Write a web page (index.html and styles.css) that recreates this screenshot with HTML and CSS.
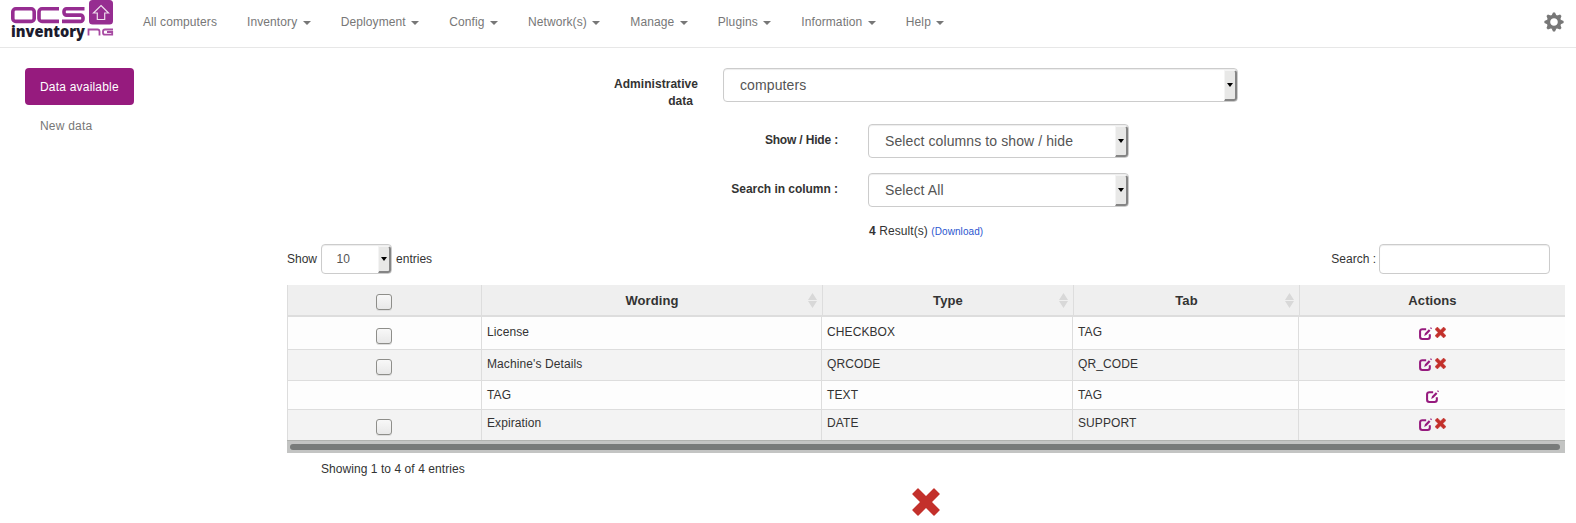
FILE: index.html
```
<!DOCTYPE html>
<html lang="en">
<head>
<meta charset="utf-8">
<title>OCS Inventory</title>
<link rel="stylesheet" href="styles.css">
</head>
<body>
<svg class="defs" width="0" height="0">
  <symbol id="edit" viewBox="0 0 12 12">
    <path d="M6.600 2H3A2 2 0 0 0 1 4V9a2 2 0 0 0 2 2h5a2 2 0 0 0 2-2V6.600" fill="none" stroke="currentColor" stroke-width="1.900"/>
    <path d="M4.800 8.200l.7-2.500L9.100 2l1.500 1.500-3.600 3.700zM10.200 1l.8-.8 1 1-.8.8z" fill="currentColor"/>
  </symbol>
  <symbol id="remove" viewBox="0 0 28 28">
    <path d="M6.500.5L14 8 21.500.5Q22 0 22.500.5L27.500 5.500Q28 6 27.500 6.500L20 14l7.500 7.500q.5.500 0 1l-5 5q-.5.500-1 0L14 20l-7.500 7.500q-.5.500-1 0l-5-5q-.5-.5 0-1L8 14 .5 6.500Q0 6 .5 5.500L5.500.5Q6 0 6.500.5z" fill="currentColor"/>
  </symbol>
</svg>
<header class="navbar">
  <a class="logo">
    <svg width="104" height="42" viewBox="0 0 104 42">
      <g fill="none" stroke="#962d91" stroke-width="3.600">
        <rect x="1.800" y="8.800" width="21.400" height="12.600" rx="3"/>
        <path d="M48 8.800H31a3 3 0 0 0-3 3v6.600a3 3 0 0 0 3 3h17"/>
        <path d="M73.500 8.800H55.500a2.500 2.500 0 0 0-2.500 2.500v1.300a2.500 2.500 0 0 0 2.500 2.500h14a2.500 2.500 0 0 1 2.500 2.500v1.300a2.500 2.500 0 0 1-2.500 2.500H51"/>
      </g>
      <rect x="78" y="0" width="24" height="24.500" rx="3.500" fill="#962d91"/>
      <path d="M90 5.500l7.500 7.500h-3.800v6.500h-7.400V13h-3.800z" fill="none" stroke="#eddcec" stroke-width="1.200"/>
      <text class="logo-word" x="0" y="36.500" textLength="74" lengthAdjust="spacingAndGlyphs">inventory</text>
      <g fill="none" stroke="#a74aa2" stroke-width="1.800">
        <path d="M77.500 35.500v-6h9a2 2 0 0 1 2 2v4"/>
        <path d="M102 29.500H94a2 2 0 0 0-2 2v1.200a2 2 0 0 0 2 2h7.200v-2.700H96"/>
      </g>
    </svg>
  </a>
  <nav class="menu">
    <a>All computers</a>
    <a>Inventory <i class="caret"></i></a>
    <a>Deployment <i class="caret"></i></a>
    <a>Config <i class="caret"></i></a>
    <a>Network(s) <i class="caret"></i></a>
    <a>Manage <i class="caret"></i></a>
    <a>Plugins <i class="caret"></i></a>
    <a>Information <i class="caret"></i></a>
    <a>Help <i class="caret"></i></a>
  </nav>
  <svg class="gear" width="20" height="20" viewBox="-10 -10 20 20">
    <circle r="5.500" fill="none" stroke="currentColor" stroke-width="3.400"/>
    <g fill="currentColor">
      <path id="t" d="M-2.500-6.200l1.500-3.400h2l1.500 3.400zM-2.500 6.200l1.500 3.400h2l1.500-3.400z"/>
      <use href="#t" transform="rotate(45)"/><use href="#t" transform="rotate(90)"/><use href="#t" transform="rotate(135)"/>
    </g>
  </svg>
</header>
<div class="page">
  <aside class="side">
    <a class="tab active">Data available</a>
    <a class="tab">New data</a>
  </aside>
  <main class="main">
    <div class="field admin"><label>Administrative<br>data<span class="pad"></span></label><div class="select"><span>computers</span><b class="drop"></b></div></div>
    <div class="field"><label class="tight">Show / Hide :</label><div class="select"><span>Select columns to show / hide</span><b class="drop"></b></div></div>
    <div class="field"><label>Search in column :</label><div class="select"><span>Select All</span><b class="drop"></b></div></div>
    <p class="result"><b>4</b> Result(s) <a>(Download)</a></p>
    <div class="tools">
      <div class="length">Show <div class="select small"><span>10</span><b class="drop"></b></div> entries</div>
      <div class="search">Search : <input type="text"></div>
    </div>
    <div class="table">
      <div class="row head"><div><i class="check"></i></div><div>Wording<i class="sort"></i></div><div>Type<i class="sort"></i></div><div>Tab<i class="sort"></i></div><div>Actions</div></div>
      <div class="row r1"><div><i class="check"></i></div><div>License</div><div>CHECKBOX</div><div>TAG</div><div class="act"><svg class="edit"><use href="#edit"/></svg><svg class="del"><use href="#remove"/></svg></div></div>
      <div class="row r2"><div><i class="check"></i></div><div>Machine's Details</div><div>QRCODE</div><div>QR_CODE</div><div class="act"><svg class="edit"><use href="#edit"/></svg><svg class="del"><use href="#remove"/></svg></div></div>
      <div class="row r3"><div></div><div>TAG</div><div>TEXT</div><div>TAG</div><div class="act"><svg class="edit"><use href="#edit"/></svg></div></div>
      <div class="row r4"><div><i class="check"></i></div><div>Expiration</div><div>DATE</div><div>SUPPORT</div><div class="act"><svg class="edit"><use href="#edit"/></svg><svg class="del"><use href="#remove"/></svg></div></div>
      <div class="scroll"><div class="thumb"></div></div>
    </div>
    <p class="info">Showing 1 to 4 of 4 entries</p>
    <svg class="remove-all"><use href="#remove"/></svg>
  </main>
</div>
</body>
</html>
```
FILE: styles.css
```
* { box-sizing: border-box; }
body { margin: 0; height: 523px; overflow: hidden; background: #fff; color: #333; font: 12px/17px "Liberation Sans", Arial, sans-serif; }
p { margin: 0; }
.defs { display: block; }
.navbar { height: 48px; border-bottom: 1px solid #e7e7e7; display: flex; color: #777; }
.logo { width: 132px; padding-left: 11px; flex: none; }
.logo svg { display: block; }
.logo-word { font: 800 15px "Open Sans", sans-serif; fill: #1c1b2e; }
.menu { display: flex; flex: 1; gap: 30px; padding: 14px 0 0 11px; white-space: nowrap; letter-spacing: .1px; }
.caret { display: inline-block; margin-left: 2px; vertical-align: middle; border-top: 4px solid; border-left: 4px solid transparent; border-right: 4px solid transparent; }
.gear { margin: 12px 12px 0 0; }
.page { display: grid; grid-template-columns: 287px 1278px; }
.side { padding: 20px 0 0 25px; display: flex; flex-direction: column; align-items: flex-start; gap: 2px; }
.tab { height: 37px; padding: 11px 15px; border-radius: 4px; color: #777; white-space: nowrap; letter-spacing: .2px; }
.tab.active { background: #961b7e; color: #fff; }
.main { padding-top: 20px; }
.field { display: grid; grid-template-columns: 551px 261px; column-gap: 30px; height: 34px; margin-bottom: 15px; }
.field label { text-align: right; font-weight: bold; padding-top: 8px; letter-spacing: -.04px; }
.field .tight { letter-spacing: -.17px; }
.pad { display: inline-block; width: 5px; }
.field.admin { grid-template-columns: 411px 515px; column-gap: 25px; margin-bottom: 22px; }
.field.admin label { letter-spacing: .05px; }
.select { display: flex; height: 34px; border: 1px solid #ccc; border-radius: 4px; color: #555; font-size: 14px; letter-spacing: .1px; box-shadow: inset 0 1px 1px rgba(0,0,0,.075); }
.select span { flex: 1; padding: 8px 0 0 16px; white-space: nowrap; }
.drop { width: 13px; margin-top: 1px; background: #e8e8e7; border: solid; border-width: 1px 2px 2px 1px; border-color: #f4f4f4 #858585 #858585 #f4f4f4; border-radius: 0 3px 3px 0; display: flex; justify-content: center; align-items: center; }
.drop::after { content: ""; border-top: 4px solid #000; border-left: 3.500px solid transparent; border-right: 3.500px solid transparent; }
.result { padding: 1px 0 0 582px; height: 22px; letter-spacing: .08px; }
.result a { color: #2a56cf; font-size: 10px; }
.tools { display: flex; justify-content: space-between; height: 41px; }
.length, .search { display: flex; height: 30px; align-items: center; gap: 4px; }
.search { padding-right: 15px; gap: 3px; }
.small { width: 71px; height: 30px; font-size: 12px; }
.small span { padding: 6px 0 0 14.500px; }
.search input { width: 171px; height: 30px; border: 1px solid #ccc; border-radius: 4px; box-shadow: inset 0 1px 1px rgba(0,0,0,.075); }
.row { display: grid; grid-template-columns: 194px 340px 251px 226px 267px; border-bottom: 1px solid #ddd; background: #fdfdfd; letter-spacing: .1px; }
.row > div { border-left: 1px solid #ddd; padding: 6px 5px 0; position: relative; }
.row > div:first-child { padding: 11px 1px 0 0; text-align: center; line-height: 0; letter-spacing: 0; }
.head { height: 32px; border-bottom: 2px solid #ddd; background: #efefef; font-weight: bold; font-size: 13px; text-align: center; grid-template-columns: 194px 341px 251px 226px 266px; }
.head > div:first-child { padding-top: 9px; }
.head > div { padding-top: 7px; }
.r1 { height: 33px; }
.r2 { height: 31px; }
.r3 { height: 29px; }
.r4 { height: 30px; border-bottom: 0; }
.r2, .r4 { background: #f3f3f3; }
.r1 > div { padding-top: 7px; }
.r3 > div { padding-top: 6px; }
.r4 > div { padding-top: 5px; }
.r2 > div:first-child { padding-top: 9px; }
.r4 > div:first-child { padding-top: 9px; }
.check { display: inline-block; width: 16px; height: 16px; border: 1px solid #8e8e8a; border-radius: 3px; background: linear-gradient(#f8f8f8, #e8e8e8); box-shadow: 0 1px 0 #ddd; }
.sort { position: absolute; right: 5px; top: 8px; width: 9px; height: 15px; background: #d8d8d8; clip-path: polygon(50% 0, 100% 46%, 0 46%, 0 54%, 100% 54%, 50% 100%, 0 54%, 0 46%); }
.row > .act { display: flex; justify-content: center; gap: 3px; padding-top: 10px; }
.r2 > .act, .r4 > .act { padding-top: 8px; }
.r3 > .act { padding-top: 9px; }
.edit { width: 13px; height: 13px; color: #961b7e; }
.del { width: 11px; height: 11px; color: #c3302b; stroke: currentColor; stroke-width: 1.500px; }
.scroll { height: 13px; background: #c3c4c3; border-top: 1px solid #b0b2af; padding: 3px 5px 0 3px; }
.thumb { height: 6px; border-radius: 3px; background: #787b7a; }
.info { padding: 8px 0 0 34px; height: 35px; letter-spacing: .06px; }
.remove-all { display: block; width: 28px; height: 28px; margin-left: 625px; color: #c3302b; }
```
